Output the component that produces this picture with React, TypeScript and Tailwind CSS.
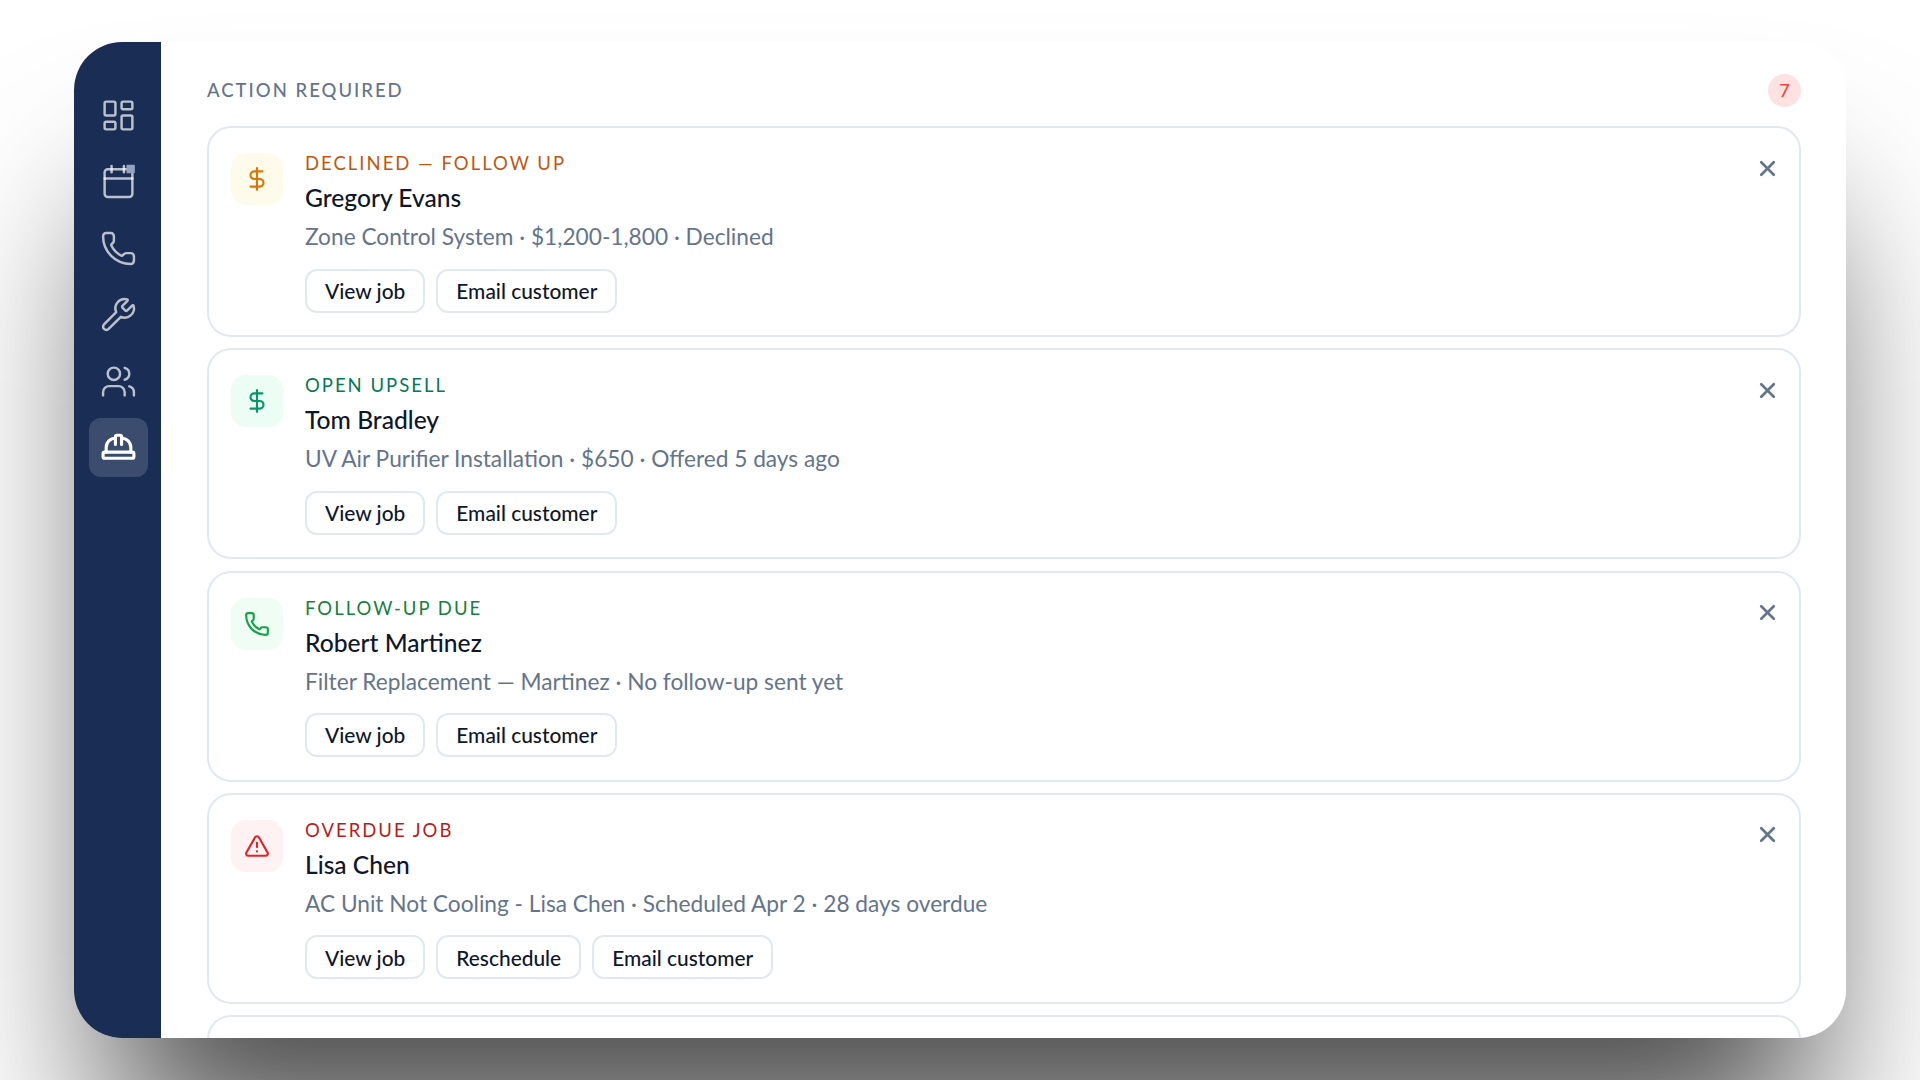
import React from "react";
import { LayoutDashboard, Phone, Wrench, Users, HardHat, DollarSign, TriangleAlert, X } from "lucide-react";

function CalendarBadge() {
  return (
    <svg width="37" height="37" viewBox="0 0 24 24" fill="none" stroke="currentColor" strokeWidth="1.6" strokeLinecap="round" strokeLinejoin="round">
      <path d="M7.5 2v4" />
      <path d="M15.5 2v4" />
      <rect x="3" y="4" width="18" height="18" rx="2" />
      <path d="M3 10h18" />
      <rect x="17.2" y="1.2" width="5.4" height="5.4" rx="0.4" fill="#94a3c4" stroke="none" />
    </svg>
  );
}

type Item = {
  label: string;
  labelClass: string;
  name: string;
  desc: string;
  iconBg: string;
  icon: React.ReactNode;
  actions: string[];
};

const items: Item[] = [
  {
    label: "DECLINED — FOLLOW UP",
    labelClass: "text-[#c2570c]",
    name: "Gregory Evans",
    desc: "Zone Control System · $1,200-1,800 · Declined",
    iconBg: "bg-[#fffbeb]",
    icon: <DollarSign size={26} strokeWidth={2} className="text-[#d97706]" />,
    actions: ["View job", "Email customer"],
  },
  {
    label: "OPEN UPSELL",
    labelClass: "text-[#047857]",
    name: "Tom Bradley",
    desc: "UV Air Purifier Installation · $650 · Offered 5 days ago",
    iconBg: "bg-[#ecfdf5]",
    icon: <DollarSign size={26} strokeWidth={2} className="text-[#059669]" />,
    actions: ["View job", "Email customer"],
  },
  {
    label: "FOLLOW-UP DUE",
    labelClass: "text-[#15803d]",
    name: "Robert Martinez",
    desc: "Filter Replacement — Martinez · No follow-up sent yet",
    iconBg: "bg-[#f0fdf4]",
    icon: <Phone size={26} strokeWidth={2} className="text-[#16a34a]" />,
    actions: ["View job", "Email customer"],
  },
  {
    label: "OVERDUE JOB",
    labelClass: "text-[#b91c1c]",
    name: "Lisa Chen",
    desc: "AC Unit Not Cooling - Lisa Chen · Scheduled Apr 2 · 28 days overdue",
    iconBg: "bg-[#fef2f2]",
    icon: <TriangleAlert size={26} strokeWidth={2} className="text-[#dc2626]" />,
    actions: ["View job", "Reschedule", "Email customer"],
  },
];

function Card({ item }: { item: Item }) {
  return (
    <div className="relative flex h-[211px] shrink-0 gap-[22px] rounded-[24px] border-2 border-[#e2e8f0] bg-white pl-[22px] pt-[25px]">
      <div className={`flex h-[52px] w-[52px] shrink-0 items-center justify-center rounded-[15px] ${item.iconBg}`}>
        {item.icon}
      </div>
      <div className="flex flex-col">
        <div className="-mt-[1px] h-[20px]">
          <div className={`text-[18.5px] leading-[22px] tracking-[2px] ${item.labelClass}`}>{item.label}</div>
        </div>
        <div className="mt-[12px] h-[27px] text-[24.6px] font-medium leading-[27px] text-[#0f172a]">{item.name}</div>
        <div className="mt-[12px] h-[27px] text-[22.7px] leading-[27px] text-[#64748b]">{item.desc}</div>
        <div className="mt-[18.5px] flex gap-[11px]">
          {item.actions.map((a) => (
            <div key={a} className="flex h-[44px] items-center rounded-[12px] border-2 border-[#e2e8f0] bg-white px-[18px] text-[20.9px] font-medium text-[#0f172a]">
              {a}
            </div>
          ))}
        </div>
      </div>
      <X size={25} strokeWidth={2.6} className="absolute right-[19.5px] top-[27.5px] text-[#64748b]" />
    </div>
  );
}

export default function App() {
  const nav = [
    <LayoutDashboard key="a" size={37} strokeWidth={1.6} />,
    <CalendarBadge key="b" />,
    <Phone key="c" size={37} strokeWidth={1.6} />,
    <Wrench key="d" size={37} strokeWidth={1.6} />,
    <Users key="e" size={37} strokeWidth={1.6} />,
  ];
  return (
    <div className="h-[1080px] w-[1920px] overflow-hidden bg-white pl-[74px] pt-[42px] font-['Lato',sans-serif]">
      <div className="flex h-[996px] w-[1772px] overflow-hidden rounded-[48px] bg-white shadow-[0_140px_170px_-35px_rgba(0,0,0,0.7)]">
        <div className="flex w-[87px] shrink-0 flex-col items-center gap-[7.4px] bg-[#1a2d55] pl-[2px] pt-[44px]">
          {nav.map((n, i) => (
            <div key={i} className="flex h-[59px] w-[59px] items-center justify-center text-white/70">
              {n}
            </div>
          ))}
          <div className="flex h-[59px] w-[59px] items-center justify-center rounded-[12px] bg-white/15 text-white">
            <HardHat size={37} strokeWidth={2} />
          </div>
        </div>
        <div className="flex min-w-0 flex-1 flex-col overflow-hidden pl-[46px] pr-[45px] pt-[32px]">
          <div className="mb-[19px] flex h-[33px] shrink-0 items-center justify-between">
            <div className="text-[18.5px] font-medium tracking-[2px] text-[#64748b]">ACTION REQUIRED</div>
            <div className="flex h-[33px] w-[33px] items-center justify-center rounded-full bg-[#fee2e2] text-[18px] font-medium text-[#ef4444]">7</div>
          </div>
          <div className="flex flex-col gap-[11.3px]">
            {items.map((it) => (
              <Card key={it.name} item={it} />
            ))}
            <div className="h-[210px] shrink-0 rounded-[24px] border-2 border-[#e2e8f0] bg-white" />
          </div>
        </div>
      </div>
    </div>
  );
}
